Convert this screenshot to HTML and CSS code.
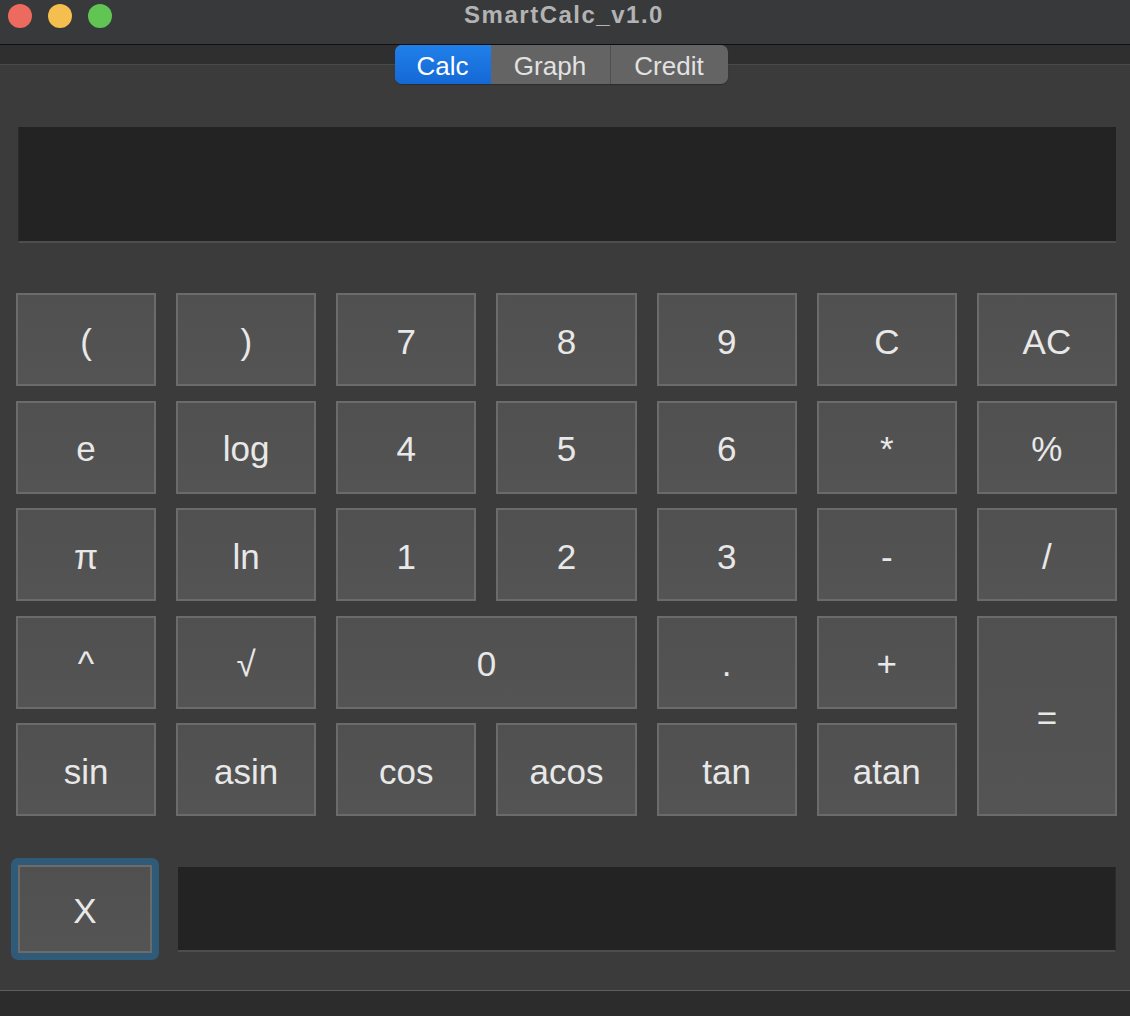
FILE: index.html
```html
<!DOCTYPE html>
<html>
<head>
<meta charset="utf-8">
<title>SmartCalc_v1.0</title>
<link rel="stylesheet" href="styles.css">
</head>
<body>
<div class="window">
  <header class="titlebar">
    <div class="lights">
      <span class="light red"></span>
      <span class="light yellow"></span>
      <span class="light green"></span>
    </div>
    <div class="title">SmartCalc_v1.0</div>
    <div class="spacer"></div>
  </header>
  <nav class="tabarea">
    <div class="segmented">
      <div class="seg seg-calc active">Calc</div>
      <div class="seg seg-graph">Graph</div>
      <div class="seg seg-credit">Credit</div>
    </div>
  </nav>
  <main class="main">
    <div class="display"></div>
    <div class="keys">
      <button class="key">(</button>
      <button class="key">)</button>
      <button class="key">7</button>
      <button class="key">8</button>
      <button class="key">9</button>
      <button class="key">C</button>
      <button class="key">AC</button>

      <button class="key">e</button>
      <button class="key">log</button>
      <button class="key">4</button>
      <button class="key">5</button>
      <button class="key">6</button>
      <button class="key">*</button>
      <button class="key">%</button>

      <button class="key">π</button>
      <button class="key">ln</button>
      <button class="key">1</button>
      <button class="key">2</button>
      <button class="key">3</button>
      <button class="key">-</button>
      <button class="key">/</button>

      <button class="key">^</button>
      <button class="key">√</button>
      <button class="key key-zero">0</button>
      <button class="key">.</button>
      <button class="key">+</button>
      <button class="key key-eq">=</button>

      <button class="key">sin</button>
      <button class="key">asin</button>
      <button class="key">cos</button>
      <button class="key">acos</button>
      <button class="key">tan</button>
      <button class="key">atan</button>
    </div>
    <div class="xrow">
      <div class="focus-ring">
        <button class="key key-x">X</button>
      </div>
      <div class="xinput"></div>
    </div>
  </main>
  <footer class="statusbar"></footer>
</div>
</body>
</html>
```

FILE: styles.css
```css
* {
  box-sizing: border-box;
}

html, body {
  margin: 0;
  padding: 0;
  background: #3b3b3b;
}

body {
  font-family: "Liberation Sans", Arial, Helvetica, sans-serif;
}

.window {
  width: 1130px;
  height: 1016px;
  display: flex;
  flex-direction: column;
  background: #3b3b3b;
  overflow: hidden;
}

/* Title bar */
.titlebar {
  height: 45px;
  background: #38393b;
  border-bottom: 1px solid #0f0f0f;
  display: grid;
  grid-template-columns: 1fr auto 1fr;
  align-items: start;
  padding-top: 4px;
}

.lights {
  display: flex;
  gap: 16px;
  padding-left: 8px;
}

.light {
  width: 24px;
  height: 24px;
  border-radius: 50%;
  display: block;
}

.red { background: #ec6a5e; }
.yellow { background: #f4bf4f; }
.green { background: #61c554; }

.title {
  font-weight: bold;
  font-size: 24px;
  letter-spacing: 1.5px;
  line-height: 22px;
  color: #b3b3b4;
  padding-right: 2px;
}

/* Tabs */
.tabarea {
  height: 40px;
  display: flex;
  justify-content: center;
  padding-right: 8px;
  background: linear-gradient(to bottom,
    #2f2f2f 0, #2f2f2f 19px,
    #4a4a4a 19px, #4a4a4a 20px,
    #3b3b3b 20px, #3b3b3b 100%);
}

.segmented {
  display: flex;
  height: 39px;
  border-radius: 7px;
  overflow: hidden;
  background: #646464;
  box-shadow: 0 1px 1px rgba(0,0,0,0.25);
}

.seg {
  display: flex;
  align-items: center;
  justify-content: center;
  font-size: 26px;
  color: #e2e2e2;
  height: 100%;
  padding-top: 3px;
}

.seg-calc {
  width: 96px;
  background: linear-gradient(to bottom, #2180ea, #1468d6);
  color: #ffffff;
}

.seg-graph {
  width: 120px;
  border-right: 1px solid #505050;
}

.seg-credit {
  width: 117px;
}

/* Main */
.main {
  flex: 1;
  display: flex;
  flex-direction: column;
}

.display {
  margin: 42px 0 0 18px;
  width: 1098px;
  height: 116px;
  background: #232323;
  border-left: 1px solid #2b2b2b;
  border-bottom: 2px solid #4d4d4d;
}

.keys {
  margin: 50px 0 0 16px;
  width: 1101px;
  display: grid;
  grid-template-columns: repeat(7, 1fr);
  grid-template-rows: repeat(5, 93px);
  column-gap: 20px;
  row-gap: 14.5px;
}

.key {
  font-family: "Liberation Sans", Arial, Helvetica, sans-serif;
  font-size: 35px;
  color: #e8e8e8;
  background: linear-gradient(to bottom, #505050, #545454);
  border: 2px solid #6b6b6b;
  border-radius: 0;
  padding: 4px 0 0 0;
  margin: 0;
  display: flex;
  align-items: center;
  justify-content: center;
  cursor: default;
}

.key-zero {
  grid-column: span 2;
}

.key-eq {
  grid-row: span 2;
}

/* X row */
.xrow {
  margin: 42px 0 0 11px;
  display: flex;
  align-items: center;
  gap: 19px;
}

.focus-ring {
  padding: 7px;
  background: #2f5a78;
  border-radius: 7px;
}

.key-x {
  width: 134px;
  height: 88px;
}

.xinput {
  width: 938px;
  height: 85px;
  background: #232323;
  border-right: 1px solid #2b2b2b;
  border-bottom: 2px solid #4d4d4d;
}

/* Status bar */
.statusbar {
  height: 26px;
  background: #2c2c2c;
  border-top: 1px solid #5e5e5e;
}
```
